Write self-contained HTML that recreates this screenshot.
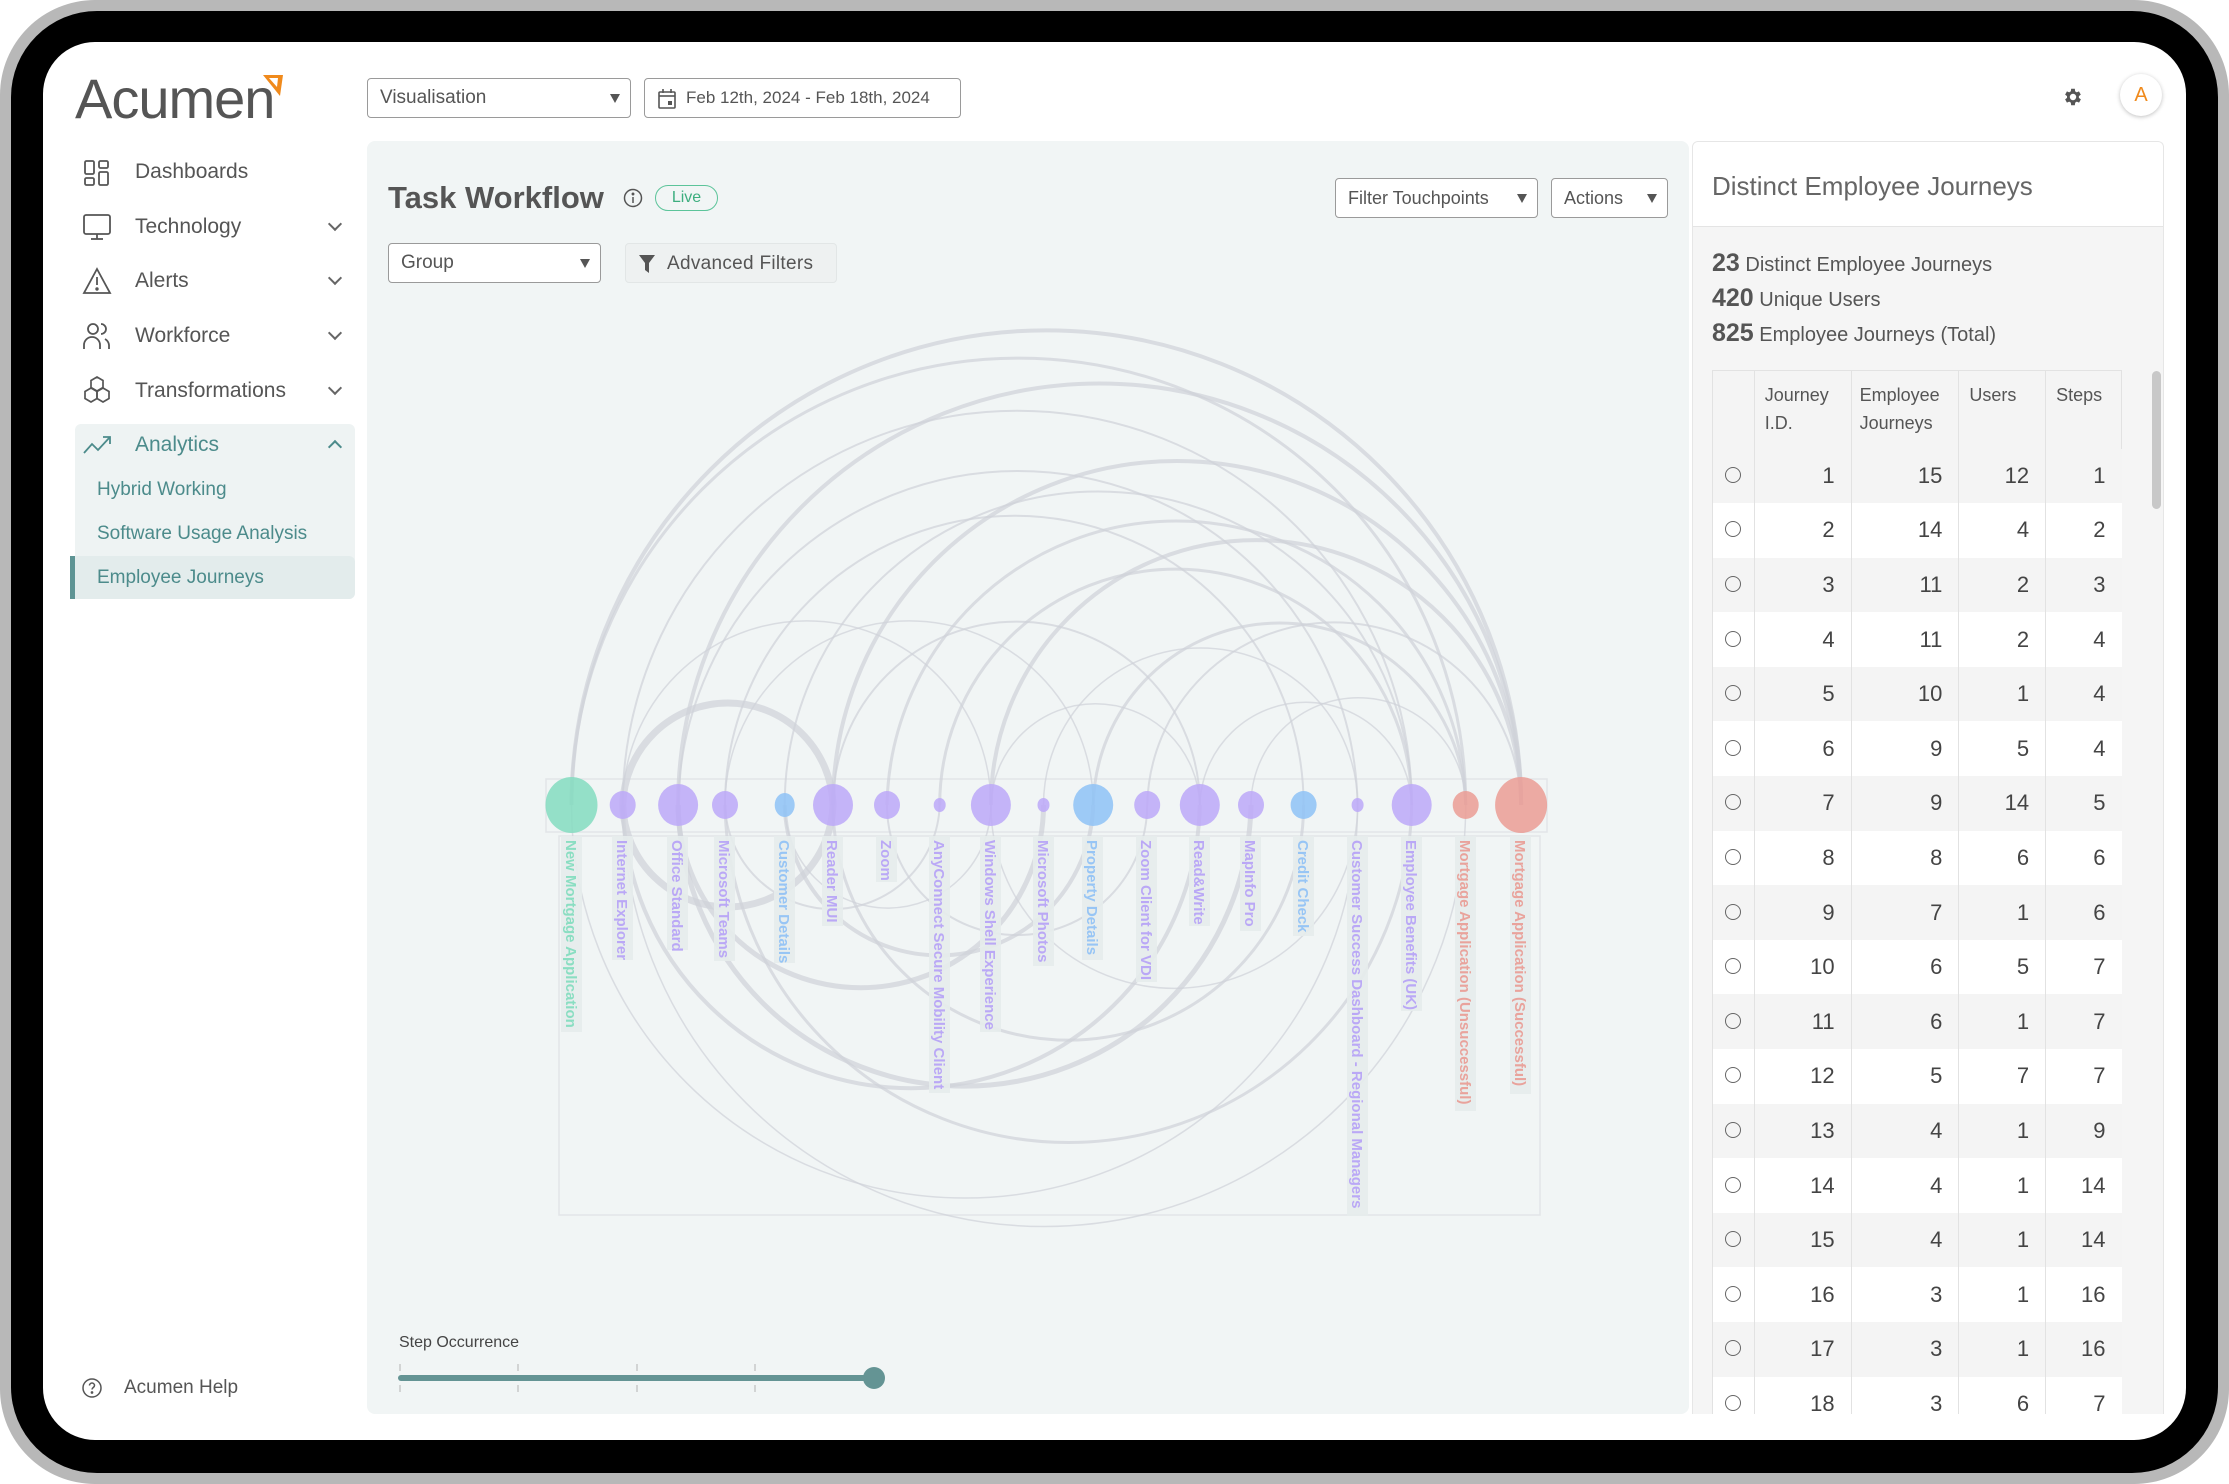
<!DOCTYPE html>
<html><head><meta charset="utf-8">
<style>
*{box-sizing:border-box;margin:0;padding:0}
body{width:2229px;height:1484px;background:#fff;font-family:"Liberation Sans",sans-serif;position:relative;overflow:hidden;color:#555}
.abs{position:absolute}
.rim{left:0;top:0;width:2229px;height:1484px;border-radius:95px;background:#b8b8b8}
.bezel{left:11px;top:11px;width:2207px;height:1462px;border-radius:86px;background:#000}
.screen{left:43px;top:42px;width:2143px;height:1398px;border-radius:52px;background:#fff;overflow:hidden}
.nav{left:135px;font-size:21px;color:#555}
.chev{left:330px;width:10px;height:10px;border-right:2px solid #666;border-bottom:2px solid #666;transform:rotate(45deg)}
.sel{border:1.5px solid #9a9a9a;border-radius:4px;background:#fff;font-size:19px;color:#555;padding-left:12px;display:flex;align-items:center}
.tri{position:absolute;right:10px;top:50%;margin-top:-4px;width:0;height:0;border-left:5px solid transparent;border-right:5px solid transparent;border-top:9px solid #555}
.sub{left:97px;font-size:19px;color:#4c8b8b}
table{border-collapse:collapse;font-size:22px;color:#444}
td{border-left:1.5px solid #e2e2e2;height:54.6px;text-align:right;padding-right:16px}
tr:nth-child(even) td{background:#f4f4f4}
tr:nth-child(odd) td{background:#fff}
td.r{text-align:center;padding:0}
.rad{display:inline-block;width:16px;height:16px;border:1.5px solid #666;border-radius:50%}
</style></head><body>
<div class="abs rim"></div>
<div class="abs bezel"></div>
<div class="abs screen"></div>

<div class="abs" style="left:75px;top:66px;font-size:56px;color:#555;letter-spacing:-1px;font-weight:300">Acumen</div>
<svg class="abs" style="left:262px;top:74px" width="22" height="24"><polygon points="1,1 21,1 18,22" fill="#f08a1c"/><polygon points="7,4 16,4 15,13" fill="#fff"/></svg>

<div class="abs sel" style="left:367px;top:78px;width:264px;height:40px">Visualisation<span class="tri"></span></div>
<div class="abs sel" style="left:644px;top:78px;width:317px;height:40px;padding-left:41px;font-size:17px">Feb 12th, 2024 - Feb 18th, 2024
<svg class="abs" style="left:12px;top:9px" width="20" height="22" viewBox="0 0 20 22"><rect x="2" y="4" width="16" height="16" rx="1" fill="none" stroke="#555" stroke-width="1.6"/><line x1="2" y1="8" x2="18" y2="8" stroke="#555" stroke-width="1.6"/><line x1="6" y1="1" x2="6" y2="5" stroke="#555" stroke-width="1.6"/><line x1="14" y1="1" x2="14" y2="5" stroke="#555" stroke-width="1.6"/><rect x="11" y="13" width="4" height="4" fill="#555"/></svg></div>

<svg class="abs" style="left:2062px;top:86px" width="22" height="22" viewBox="0 0 24 24"><path fill="#555" d="M19.4 13a7.5 7.5 0 000-2l2.1-1.6-2-3.5-2.5 1a7 7 0 00-1.7-1L15 3h-4l-.4 2.9a7 7 0 00-1.7 1l-2.5-1-2 3.5L6.5 11a7.5 7.5 0 000 2l-2.1 1.6 2 3.5 2.5-1a7 7 0 001.7 1L11 21h4l.4-2.9a7 7 0 001.7-1l2.5 1 2-3.5zM13 15.5a3.5 3.5 0 110-7 3.5 3.5 0 010 7z" transform="translate(-1 0)"/></svg>
<div class="abs" style="left:2120px;top:74px;width:42px;height:42px;border-radius:50%;background:#fff;box-shadow:0 1px 4px rgba(0,0,0,.25);color:#f08a1c;font-size:20px;text-align:center;line-height:42px">A</div>

<svg class="abs" style="left:83px;top:159px" width="28" height="28" viewBox="0 0 28 28" fill="none" stroke="#555" stroke-width="1.8"><rect x="2" y="2" width="9" height="13" rx="1.5"/><rect x="16" y="2" width="9" height="7" rx="1.5"/><rect x="2" y="19" width="9" height="7" rx="1.5"/><rect x="16" y="13" width="9" height="13" rx="1.5"/></svg>
<div class="abs nav" style="top:160px">Dashboards</div>
<svg class="abs" style="left:82px;top:212px" width="30" height="30" viewBox="0 0 30 30" fill="none" stroke="#555" stroke-width="1.8"><rect x="2" y="3" width="26" height="19" rx="2"/><line x1="15" y1="22" x2="15" y2="27"/><line x1="9" y1="27" x2="21" y2="27"/></svg>
<div class="abs nav" style="top:215px">Technology</div><div class="abs chev" style="top:219px"></div>
<svg class="abs" style="left:82px;top:266px" width="30" height="30" viewBox="0 0 30 30" fill="none" stroke="#555" stroke-width="1.8"><path d="M15 3L28 27H2z"/><line x1="15" y1="11" x2="15" y2="19"/><circle cx="15" cy="23" r=".8" fill="#555"/></svg>
<div class="abs nav" style="top:269px">Alerts</div><div class="abs chev" style="top:273px"></div>
<svg class="abs" style="left:82px;top:321px" width="30" height="30" viewBox="0 0 30 30" fill="none" stroke="#555" stroke-width="1.8"><circle cx="11" cy="8" r="5"/><path d="M2 28v-4a8 8 0 0116 0v4"/><path d="M19 3a5 5 0 010 10"/><path d="M23 18a8 8 0 014 6v4"/></svg>
<div class="abs nav" style="top:324px">Workforce</div><div class="abs chev" style="top:328px"></div>
<svg class="abs" style="left:82px;top:375px" width="30" height="32" viewBox="0 0 30 32" fill="none" stroke="#555" stroke-width="1.7"><path d="M15 2l6 3.5v7L15 16l-6-3.5v-7z"/><path d="M9 13l6 3.5v7L9 27l-6-3.5v-7z"/><path d="M21 13l6 3.5v7L21 27l-6-3.5v-7z"/></svg>
<div class="abs nav" style="top:379px">Transformations</div><div class="abs chev" style="top:383px"></div>

<div class="abs" style="left:75px;top:424px;width:280px;height:175px;background:#eef3f3;border-radius:6px"></div>
<div class="abs" style="left:70px;top:556px;width:285px;height:43px;background:#e3ecec;border-radius:0 6px 6px 0;border-left:5px solid #5e9494"></div>
<svg class="abs" style="left:82px;top:433px" width="32" height="24" viewBox="0 0 32 24" fill="none" stroke="#4c8b8b" stroke-width="1.8"><path d="M2 20l8-9 6 6 12-13"/><path d="M21 4h7v7"/></svg>
<div class="abs nav" style="top:433px;color:#4c8b8b">Analytics</div>
<div class="abs" style="left:330px;top:442px;width:10px;height:10px;border-left:2px solid #4c8b8b;border-top:2px solid #4c8b8b;transform:rotate(45deg)"></div>
<div class="abs sub" style="top:479px">Hybrid Working</div>
<div class="abs sub" style="top:523px">Software Usage Analysis</div>
<div class="abs sub" style="top:567px">Employee Journeys</div>

<svg class="abs" style="left:81px;top:1377px" width="22" height="22" viewBox="0 0 22 22" fill="none" stroke="#555" stroke-width="1.5"><circle cx="11" cy="11" r="9"/><path d="M8.5 8.5a2.5 2.5 0 115 0c0 2-2.5 2-2.5 4"/><circle cx="11" cy="15.5" r=".6" fill="#555"/></svg>
<div class="abs" style="left:124px;top:1377px;font-size:19px;color:#555">Acumen Help</div>

<div class="abs" style="left:367px;top:141px;width:1322px;height:1273px;background:#f1f5f5;border-radius:8px"></div>
<div class="abs" style="left:388px;top:180px;font-size:31px;font-weight:bold;color:#555">Task Workflow</div>
<svg class="abs" style="left:623px;top:188px" width="20" height="20" viewBox="0 0 20 20" fill="none" stroke="#555" stroke-width="1.5"><circle cx="10" cy="10" r="8.5"/><line x1="10" y1="9" x2="10" y2="15"/><circle cx="10" cy="6" r=".7" fill="#555"/></svg>
<div class="abs" style="left:655px;top:185px;width:63px;height:26px;border:1.5px solid #5cc49a;border-radius:13px;color:#3dae7f;font-size:16px;text-align:center;line-height:23px">Live</div>
<div class="abs sel" style="left:1335px;top:178px;width:203px;height:40px;font-size:18px">Filter Touchpoints<span class="tri"></span></div>
<div class="abs sel" style="left:1551px;top:178px;width:117px;height:40px;font-size:18px">Actions<span class="tri"></span></div>
<div class="abs sel" style="left:388px;top:243px;width:213px;height:40px">Group<span class="tri"></span></div>
<div class="abs" style="left:625px;top:243px;width:212px;height:40px;background:#eef1f1;border:1px solid #e2e6e6;border-radius:4px;font-size:19px;color:#555;padding:9px 0 0 41px;letter-spacing:.3px">Advanced Filters
<svg class="abs" style="left:13px;top:11px" width="16" height="18" viewBox="0 0 16 18"><path d="M0 0h16l-6 8v10l-4-3V8z" fill="#555"/></svg></div>

<svg class="abs" style="left:0;top:0" width="2229" height="1484">
<rect x="546" y="779" width="1001" height="53" fill="none" stroke="#e2e5e8" stroke-width="1.5"/>
<rect x="559" y="836" width="981" height="379" fill="none" stroke="#e2e5e8" stroke-width="1.5"/>
<g fill="none" stroke="#cfd2d8" stroke-opacity=".7">
<path stroke-width="4" d="M571.5 805A474.8 474.8 0 0 1 1521.1 805"/>
<path stroke-width="3" d="M571.5 805A447.1 447.1 0 0 1 1465.7 805"/>
<path stroke-width="2" d="M622.7 805A394.5 394.5 0 0 1 1411.7 805"/>
<path stroke-width="4" d="M678.1 805A421.5 421.5 0 0 1 1521.1 805"/>
<path stroke-width="2" d="M678.1 805A339.8 339.8 0 0 1 1357.6 805"/>
<path stroke-width="2" d="M725 805A289.3 289.3 0 0 1 1303.6 805"/>
<path stroke-width="2" d="M784.7 805A313.5 313.5 0 0 1 1411.7 805"/>
<path stroke-width="4" d="M833 805A344 344 0 0 1 1521.1 805"/>
<path stroke-width="3" d="M887 805A289.4 289.4 0 0 1 1465.7 805"/>
<path stroke-width="3" d="M939.7 805A236 236 0 0 1 1411.7 805"/>
<path stroke-width="4" d="M990.9 805A265.1 265.1 0 0 1 1521.1 805"/>
<path stroke-width="3" d="M1093.2 805A186.3 186.3 0 0 1 1465.7 805"/>
<path stroke-width="2" d="M1147.2 805A187 187 0 0 1 1521.1 805"/>
<path stroke-width="2" d="M833 805A183.4 183.4 0 0 1 1199.8 805"/>
<path stroke-width="1.5" d="M990.9 805A104.5 104.5 0 0 1 1199.8 805"/>
<path stroke-width="1.5" d="M622.7 805A184.1 184.1 0 0 1 990.9 805"/>
<path stroke-width="1.5" d="M725 805A184.1 184.1 0 0 1 1093.2 805"/>
<path stroke-width="1.5" d="M1199.8 805A106 106 0 0 1 1411.7 805"/>
<path stroke-width="1.5" d="M1043.5 805A157 157 0 0 1 1357.6 805"/>
<path stroke-width="1.5" d="M1251 805A107 107 0 0 1 1465.7 805"/>
<path stroke-width="7" d="M622.7 805A105.2 105.2 0 0 1 833 805"/>
<path stroke-width="7" d="M622.7 805A105.2 105.2 0 0 0 833 805"/>
<path stroke-width="5" d="M678.1 805A182.7 182.7 0 0 0 1043.5 805"/>
<path stroke-width="4" d="M784.7 805A154.3 154.3 0 0 0 1093.2 805"/>
<path stroke-width="2" d="M725 805A107.4 107.4 0 0 0 939.7 805"/>
<path stroke-width="1.5" d="M571.5 805A393 393 0 0 0 1357.6 805"/>
<path stroke-width="4" d="M622.7 805A288.6 288.6 0 0 0 1199.8 805"/>
<path stroke-width="5" d="M678.1 805A286.5 286.5 0 0 0 1251 805"/>
<path stroke-width="3" d="M725 805A343.4 343.4 0 0 0 1411.7 805"/>
<path stroke-width="3" d="M833 805A235.3 235.3 0 0 0 1303.6 805"/>
<path stroke-width="2" d="M887 805A130 130 0 0 0 1147.2 805"/>
<path stroke-width="1.5" d="M784.7 805A103 103 0 0 0 990.9 805"/>
<path stroke-width="1.5" d="M622.7 805A421.5 421.5 0 0 0 1465.7 805"/>
<path stroke-width="1.5" d="M990.9 805A183 183 0 0 0 1357.6 805"/>
</g>
<g fill-opacity=".85">
<ellipse cx="571.5" cy="805" rx="26" ry="28" fill="#84dcbf"/>
<ellipse cx="622.7" cy="805" rx="13" ry="14" fill="#bca8f8"/>
<ellipse cx="678.1" cy="805" rx="20" ry="21" fill="#bca8f8"/>
<ellipse cx="725" cy="805" rx="13" ry="14" fill="#bca8f8"/>
<ellipse cx="784.7" cy="805" rx="10" ry="12" fill="#8ec2f6"/>
<ellipse cx="833" cy="805" rx="20" ry="21" fill="#bca8f8"/>
<ellipse cx="887" cy="805" rx="13" ry="14" fill="#bca8f8"/>
<ellipse cx="939.7" cy="805" rx="6" ry="7" fill="#bca8f8"/>
<ellipse cx="990.9" cy="805" rx="20" ry="21" fill="#bca8f8"/>
<ellipse cx="1043.5" cy="805" rx="6" ry="7" fill="#bca8f8"/>
<ellipse cx="1093.2" cy="805" rx="20" ry="21" fill="#8ec2f6"/>
<ellipse cx="1147.2" cy="805" rx="13" ry="14" fill="#bca8f8"/>
<ellipse cx="1199.8" cy="805" rx="20" ry="21" fill="#bca8f8"/>
<ellipse cx="1251" cy="805" rx="13" ry="14" fill="#bca8f8"/>
<ellipse cx="1303.6" cy="805" rx="13" ry="14" fill="#8ec2f6"/>
<ellipse cx="1357.6" cy="805" rx="6" ry="7" fill="#bca8f8"/>
<ellipse cx="1411.7" cy="805" rx="20" ry="21" fill="#bca8f8"/>
<ellipse cx="1465.7" cy="805" rx="13" ry="14" fill="#eb9c94"/>
<ellipse cx="1521.1" cy="805" rx="26" ry="28" fill="#eb9c94"/>
</g>
<g fill="#e5ecec" fill-opacity=".9">
<rect x="561" y="836" width="21" height="196"/><rect x="612" y="836" width="21" height="124"/><rect x="667" y="836" width="21" height="114"/><rect x="714" y="836" width="21" height="125"/><rect x="774" y="836" width="21" height="127"/><rect x="822" y="836" width="21" height="90"/><rect x="876" y="836" width="21" height="46"/><rect x="929" y="836" width="21" height="257"/><rect x="980" y="836" width="21" height="196"/><rect x="1033" y="836" width="21" height="130"/><rect x="1082" y="836" width="21" height="124"/><rect x="1136" y="836" width="21" height="146"/><rect x="1189" y="836" width="21" height="90"/><rect x="1240" y="836" width="21" height="95"/><rect x="1293" y="836" width="21" height="100"/><rect x="1347" y="836" width="21" height="380"/><rect x="1401" y="836" width="21" height="175"/><rect x="1455" y="836" width="21" height="275"/><rect x="1510" y="836" width="21" height="258"/>
</g>
<g font-family="Liberation Sans, sans-serif" font-size="15" font-weight="bold" fill-opacity=".9">
<text transform="translate(566 840) rotate(90)" fill="#7fdcbc">New Mortgage Application</text>
<text transform="translate(617 840) rotate(90)" fill="#b5a0f6">Internet Explorer</text>
<text transform="translate(672 840) rotate(90)" fill="#b5a0f6">Office Standard</text>
<text transform="translate(719 840) rotate(90)" fill="#b5a0f6">Microsoft Teams</text>
<text transform="translate(779 840) rotate(90)" fill="#8ec0f5">Customer Details</text>
<text transform="translate(827 840) rotate(90)" fill="#b5a0f6">Reader MUI</text>
<text transform="translate(881 840) rotate(90)" fill="#b5a0f6">Zoom</text>
<text transform="translate(934 840) rotate(90)" fill="#b5a0f6">AnyConnect Secure Mobility Client</text>
<text transform="translate(985 840) rotate(90)" fill="#b5a0f6">Windows Shell Experience</text>
<text transform="translate(1038 840) rotate(90)" fill="#b5a0f6">Microsoft Photos</text>
<text transform="translate(1087 840) rotate(90)" fill="#8ec0f5">Property Details</text>
<text transform="translate(1141 840) rotate(90)" fill="#b5a0f6">Zoom Client for VDI</text>
<text transform="translate(1194 840) rotate(90)" fill="#b5a0f6">Read&amp;Write</text>
<text transform="translate(1245 840) rotate(90)" fill="#b5a0f6">MapInfo Pro</text>
<text transform="translate(1298 840) rotate(90)" fill="#8ec0f5">Credit Check</text>
<text transform="translate(1352 840) rotate(90)" fill="#b5a0f6">Customer Success Dashboard - Regional Managers</text>
<text transform="translate(1406 840) rotate(90)" fill="#b5a0f6">Employee Benefits (UK)</text>
<text transform="translate(1460 840) rotate(90)" fill="#e99a92">Mortgage Application (Unsuccessful)</text>
<text transform="translate(1515 840) rotate(90)" fill="#e99a92">Mortgage Application (Successful)</text>
</g>
<g stroke="#c8c8c8" stroke-width="1.5"><line x1="400" y1="1364" x2="400" y2="1371"/><line x1="400" y1="1385" x2="400" y2="1392"/><line x1="518" y1="1364" x2="518" y2="1371"/><line x1="518" y1="1385" x2="518" y2="1392"/><line x1="637" y1="1364" x2="637" y2="1371"/><line x1="637" y1="1385" x2="637" y2="1392"/><line x1="755" y1="1364" x2="755" y2="1371"/><line x1="755" y1="1385" x2="755" y2="1392"/></g>
<line x1="401" y1="1378" x2="874" y2="1378" stroke="#649494" stroke-width="6" stroke-linecap="round"/>
<circle cx="874" cy="1378" r="11" fill="#649494"/>
</svg>
<div class="abs" style="left:399px;top:1334px;font-size:16px;color:#444">Step Occurrence</div>

<div class="abs" style="left:1692px;top:141px;width:472px;height:1273px;background:#f5f5f5;border:1.5px solid #e6e6e6;border-bottom:none;border-radius:6px 6px 0 0;overflow:hidden">
<div style="height:85px;background:#fff;border-bottom:1.5px solid #e4e4e4;padding:29px 0 0 19px;font-size:26px;color:#666;font-weight:300">Distinct Employee Journeys</div>
<div style="padding:20px 0 0 19px;font-size:20px;color:#555;line-height:33px">
<div><b style="font-size:25px;color:#555">23</b> Distinct Employee Journeys</div>
<div><b style="font-size:25px;color:#555">420</b> Unique Users</div>
<div><b style="font-size:25px;color:#555">825</b> Employee Journeys (Total)</div>
</div>
<div class="abs" style="left:19px;top:228px;width:410px;height:1100px;overflow:hidden">
<table style="width:410px">
<colgroup><col style="width:42px"><col style="width:97px"><col style="width:108px"><col style="width:87px"><col style="width:76px"></colgroup>
<tr style="height:78px"><td style="background:#f4f4f4;border-left:1.5px solid #e2e2e2;border-top:1.5px solid #e2e2e2"></td><td style="background:#f4f4f4;text-align:left;vertical-align:top;padding:10px 0 0 10px;font-size:18px;line-height:28px;color:#555;border-top:1.5px solid #e2e2e2">Journey<br>I.D.</td><td style="background:#f4f4f4;text-align:left;vertical-align:top;padding:10px 0 0 8px;font-size:18px;line-height:28px;color:#555;border-top:1.5px solid #e2e2e2">Employee<br>Journeys</td><td style="background:#f4f4f4;text-align:left;vertical-align:top;padding:10px 0 0 10px;font-size:18px;line-height:28px;color:#555;border-top:1.5px solid #e2e2e2">Users</td><td style="background:#f4f4f4;text-align:left;vertical-align:top;padding:10px 0 0 10px;font-size:18px;line-height:28px;color:#555;border-top:1.5px solid #e2e2e2;border-right:1.5px solid #e2e2e2">Steps</td></tr>
<tr><td class="r"><span class="rad"></span></td><td>1</td><td>15</td><td>12</td><td>1</td></tr>
<tr><td class="r"><span class="rad"></span></td><td>2</td><td>14</td><td>4</td><td>2</td></tr>
<tr><td class="r"><span class="rad"></span></td><td>3</td><td>11</td><td>2</td><td>3</td></tr>
<tr><td class="r"><span class="rad"></span></td><td>4</td><td>11</td><td>2</td><td>4</td></tr>
<tr><td class="r"><span class="rad"></span></td><td>5</td><td>10</td><td>1</td><td>4</td></tr>
<tr><td class="r"><span class="rad"></span></td><td>6</td><td>9</td><td>5</td><td>4</td></tr>
<tr><td class="r"><span class="rad"></span></td><td>7</td><td>9</td><td>14</td><td>5</td></tr>
<tr><td class="r"><span class="rad"></span></td><td>8</td><td>8</td><td>6</td><td>6</td></tr>
<tr><td class="r"><span class="rad"></span></td><td>9</td><td>7</td><td>1</td><td>6</td></tr>
<tr><td class="r"><span class="rad"></span></td><td>10</td><td>6</td><td>5</td><td>7</td></tr>
<tr><td class="r"><span class="rad"></span></td><td>11</td><td>6</td><td>1</td><td>7</td></tr>
<tr><td class="r"><span class="rad"></span></td><td>12</td><td>5</td><td>7</td><td>7</td></tr>
<tr><td class="r"><span class="rad"></span></td><td>13</td><td>4</td><td>1</td><td>9</td></tr>
<tr><td class="r"><span class="rad"></span></td><td>14</td><td>4</td><td>1</td><td>14</td></tr>
<tr><td class="r"><span class="rad"></span></td><td>15</td><td>4</td><td>1</td><td>14</td></tr>
<tr><td class="r"><span class="rad"></span></td><td>16</td><td>3</td><td>1</td><td>16</td></tr>
<tr><td class="r"><span class="rad"></span></td><td>17</td><td>3</td><td>1</td><td>16</td></tr>
<tr><td class="r"><span class="rad"></span></td><td>18</td><td>3</td><td>6</td><td>7</td></tr>
</table>
</div>
<div class="abs" style="left:459px;top:229px;width:9px;height:138px;background:#c8c8c8;border-radius:5px"></div>
</div>
</body></html>
